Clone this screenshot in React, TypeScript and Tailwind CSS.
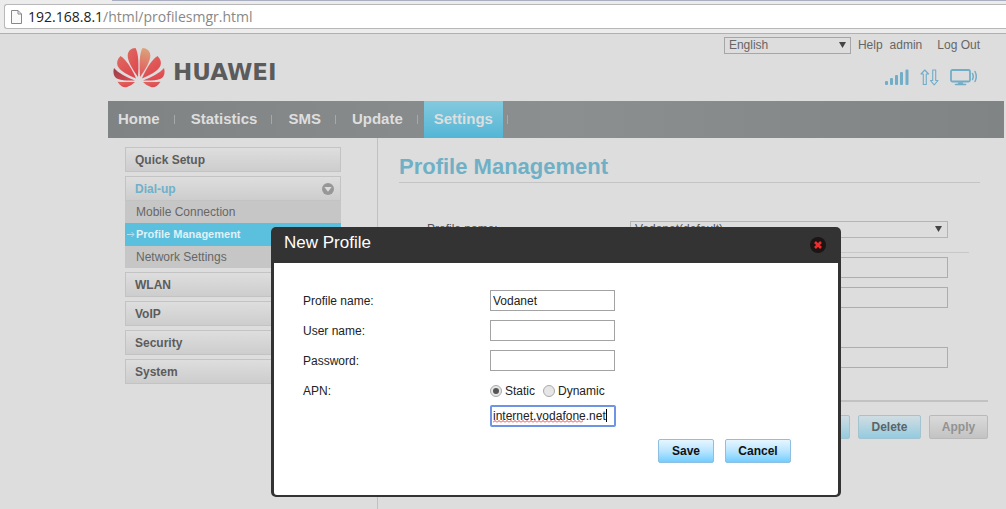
import React, { useState } from "react";

const navItems = ["Home", "Statistics", "SMS", "Update", "Settings"];

function Logo() {
  return (
    <div className="flex items-center gap-2">
      <svg width="52" height="42" viewBox="0 0 52 42" role="img" aria-label="Huawei">
        <defs>
          <linearGradient id="petal" x1="0" y1="0" x2="0.6" y2="1">
            <stop offset="0" stopColor="#de6a60" />
            <stop offset="1" stopColor="#e0474f" />
          </linearGradient>
          <linearGradient id="petalLight" x1="0.5" y1="0" x2="0.4" y2="1">
            <stop offset="0" stopColor="#dda37b" />
            <stop offset="1" stopColor="#e0555a" />
          </linearGradient>
          <linearGradient id="petalDark" x1="0" y1="0" x2="1" y2="0.8">
            <stop offset="0" stopColor="#96404a" />
            <stop offset="1" stopColor="#e0474f" />
          </linearGradient>
        </defs>
        <g fill="url(#petal)">
          <path d="M25 30C25.600 19 26 7 22.500 1C18 1 15 4 14.700 8C14.300 14 20 23 25 30Z" />
          <path d="M23 31.500C20 24 14 13 7.500 9C4.500 12 3.500 15 4.500 18.500C6.500 24 16 28.500 23 31.500Z" />
          <path d="M29 31.500C32 24 38 13 44.500 9C47.500 12 48.500 15 47.500 18.500C45.500 24 36 28.500 29 31.500Z" />
          <path d="M30 33.500C38 30.500 47 26 51 21C52.500 26 51 30.500 47 32C42.500 33.800 36 33.700 30 33.500Z" />
          <path d="M30 35C36 35 42 35 47.500 34.700C44.500 39.500 41 41 38 40C35 39 32 37 30 35Z" />
          <path d="M22 35C16 35 10 35 4.500 34.700C7.500 39.500 11 41 14 40C17 39 20 37 22 35Z" />
        </g>
        <path fill="url(#petalLight)" d="M27 30C26.400 19 26 7 29.500 1C34 1 37 4 37.300 8C37.700 14 32 23 27 30Z" />
        <path fill="url(#petalDark)" d="M22 33.500C14 30.500 5 26 1 21C-0.500 26 1 30.500 5 32C9.500 33.800 16 33.700 22 33.500Z" />
      </svg>
      <span className="pt-[7px] font-['DejaVu_Sans'] text-[23px] leading-6 font-bold text-[#5b5b5b]">HUAWEI</span>
    </div>
  );
}

function StatusIcons() {
  return (
    <div className="flex items-center gap-[11px] text-[#72adc8]">
      <svg width="24" height="17" viewBox="0 0 24 17" fill="currentColor" aria-label="Signal">
        <rect x="0" y="12" width="3" height="4" rx="1" />
        <rect x="5" y="9" width="3" height="7" rx="1" />
        <rect x="10" y="6" width="3" height="10" rx="1" />
        <rect x="15" y="3" width="3" height="13" rx="1" />
        <rect x="20.500" y="0.500" width="3" height="15.500" rx="1" />
      </svg>
      <svg width="19" height="17" viewBox="0 0 19 17" fill="none" stroke="currentColor" strokeWidth="1.100" strokeLinejoin="round" aria-label="Traffic">
        <path d="M3.300 15.500V5H1L4.800 1L8.600 5H6.300V15.500Z" />
        <path d="M12.700 1V11.500H10.400L14.200 15.800L18 11.500H15.700V1Z" />
      </svg>
      <svg width="28" height="17" viewBox="0 0 28 17" fill="none" stroke="currentColor" strokeLinecap="round" aria-label="Connected">
        <rect x="1" y="1" width="19" height="11.500" rx="1.500" strokeWidth="1.800" />
        <path d="M8.500 14H12.500M5.500 15.500H15.500" strokeWidth="1.600" />
        <path d="M22.500 4.500Q24 7.500 22.500 10.500M25 2.500Q27.600 7.500 25 12.500" strokeWidth="1.500" />
      </svg>
    </div>
  );
}

function Arrow({ className }: { className: string }) {
  return (
    <svg className={`pointer-events-none absolute ${className}`} width="7" height="6" viewBox="0 0 7 6" fill="#444">
      <path d="M0 0H7L3.500 6Z" />
    </svg>
  );
}

function MenuHead({ children, active }: { children: React.ReactNode; active?: boolean }) {
  return (
    <button
      className={`flex h-[25px] w-full items-center justify-between border border-[#c3c3c3] bg-linear-to-b from-[#dedede] to-[#cdcdcd] pr-[6px] pl-[9px] text-left font-bold ${active ? "text-[#6fb0ca]" : "text-[#5c5c5c]"}`}
    >
      {children}
      {active && (
        <svg width="12" height="12" viewBox="0 0 12 12" aria-hidden="true">
          <circle cx="6" cy="6" r="6" fill="#979797" />
          <path d="M2.300 4H9.700L6 8.700Z" fill="#dcdcdc" />
        </svg>
      )}
    </button>
  );
}

function Sidebar() {
  return (
    <aside className="w-[216px] shrink-0 pt-[9px] text-[12px]">
      <ul className="flex flex-col gap-1">
        <li><MenuHead>Quick Setup</MenuHead></li>
        <li>
          <MenuHead active>Dial-up</MenuHead>
          <ul className="bg-[#c6c6c6] text-[#666]">
            <li><a href="#mobile" className="block h-[22px] pl-[11px] leading-[22px]">Mobile Connection</a></li>
            <li>
              <a href="#profile" className="flex h-[23px] items-center gap-px bg-[#5bbfde] pl-[2px] text-[11px] font-bold text-[#dff1f7]">
                <svg width="8" height="7" viewBox="0 0 8 7" fill="none" stroke="#b4dfee" aria-hidden="true">
                  <path d="M0 3.500H7M4.500 1L7 3.500L4.500 6" />
                </svg>
                Profile Management
              </a>
            </li>
            <li><a href="#network" className="block h-[22px] pl-[11px] leading-[22px]">Network Settings</a></li>
          </ul>
        </li>
        {["WLAN", "VoIP", "Security", "System"].map((name) => (
          <li key={name}><MenuHead>{name}</MenuHead></li>
        ))}
      </ul>
    </aside>
  );
}

const pageInput = "col-start-2 h-[21px] w-full border border-[#adadad] bg-transparent px-1";
const pageButton =
  "h-6 rounded-[2px] border border-[#a3c3d0] bg-linear-to-b from-[#d0dde2] to-[#94cbe0] text-[12px] font-bold text-[#5c6468]";

function ProfilePage() {
  return (
    <main className="min-h-[371px] min-w-0 flex-1 border-l border-[#c0c0c0] pl-[21px] text-[12px] text-[#555]">
      <h1 className="mr-2 border-b border-[#c4c4c4] pt-[14px] text-[22px] leading-[30px] font-bold text-[#6fb0c6]">
        Profile Management
      </h1>
      <div className="mt-[37px] mr-[19px] ml-7 grid grid-cols-[203px_1fr] items-center">
        <label htmlFor="profile">Profile name:</label>
        <div className="relative mr-[21px]">
          <select id="profile" className="block h-[17px] w-full appearance-none border border-[#b4b4b4] bg-transparent px-1 leading-[15px]">
            <option>Vodanet(default)</option>
          </select>
          <Arrow className="top-[5px] right-[6px]" />
        </div>
      </div>
      <div className="mt-[14px] mr-[19px] ml-7 border-t border-[#c8c8c8]" />
      <div className="mt-1 mr-10 ml-7 grid auto-rows-[21px] grid-cols-[203px_1fr] items-center gap-y-[9px]">
        <label htmlFor="user">User name:</label>
        <input id="user" className={pageInput} />
        <label htmlFor="pass">Password:</label>
        <input id="pass" type="password" className={pageInput} />
        <span>APN:</span>
        <span>Static</span>
        <label htmlFor="apn" className="invisible">APN</label>
        <input id="apn" className={pageInput} />
      </div>
      <div className="mt-8 border-t-2 border-[#c2c2c2]" />
      <div className="mt-[13px] flex justify-end gap-2">
        <button className={`${pageButton} w-[100px]`}>New Profile</button>
        <button className={`${pageButton} w-[63px]`}>Delete</button>
        <button className="h-6 w-[59px] rounded-[2px] border border-[#b9b9b9] bg-linear-to-b from-[#dadada] to-[#c3c3c3] text-[12px] font-bold text-[#929292]">
          Apply
        </button>
      </div>
    </main>
  );
}

const dialogInput = "h-[21px] w-[125px] border border-[#a3a3a3] bg-white px-[2px] text-[12px] text-[#222] outline-none";
const dialogButton =
  "h-6 rounded-[2px] border border-[#8fbfe0] bg-linear-to-b from-[#e6f6ff] via-[#b9e5ff] to-[#6fceff] text-[12px] font-bold text-[#111]";
const radio =
  "grid size-3 appearance-none place-items-center rounded-full border border-[#aaa] bg-[#e6e6e6] before:size-[6px] before:rounded-full checked:before:bg-[#555]";

function Dialog({ onClose }: { onClose: () => void }) {
  const [mode, setMode] = useState("static");
  const [apn, setApn] = useState("internet.vodafone.net");
  const [name, setName] = useState("Vodanet");
  return (
    <section
      role="dialog"
      aria-labelledby="dialog-title"
      className="absolute top-[193px] left-1/2 w-[570px] -translate-x-1/2 rounded-[5px] bg-[#333] px-[3px] pb-[2px]"
    >
      <header className="flex h-9 items-center justify-between pr-3 pl-[10px]">
        <h2 id="dialog-title" className="pb-1 text-[17px] leading-5 text-white">New Profile</h2>
        <button aria-label="Close" onClick={onClose}>
          <svg width="16" height="16" viewBox="0 0 16 16" className="block">
            <circle cx="8" cy="8" r="8" fill="#1b1515" />
            <path d="M5 5L11 11M11 5L5 11" stroke="#ee2c2c" strokeWidth="2.600" />
          </svg>
        </button>
      </header>
      <form className="rounded-b-[3px] bg-white px-[29px] pt-[27px] pb-8 text-[12px] text-[#222]" onSubmit={(e) => e.preventDefault()}>
        <div className="grid auto-rows-[21px] grid-cols-[187px_1fr] items-center gap-y-[9px]">
          <label htmlFor="d-name">Profile name:</label>
          <input id="d-name" className={dialogInput} value={name} onChange={(e) => setName(e.target.value)} />
          <label htmlFor="d-user">User name:</label>
          <input id="d-user" className={dialogInput} />
          <label htmlFor="d-pass">Password:</label>
          <input id="d-pass" type="password" className={dialogInput} />
          <label htmlFor="d-apn">APN:</label>
          <div className="flex items-center gap-2">
            <label className="flex items-center gap-[3px]">
              <input type="radio" name="mode" className={radio} checked={mode === "static"} onChange={() => setMode("static")} />
              Static
            </label>
            <label className="flex items-center gap-[3px]">
              <input type="radio" name="mode" className={radio} checked={mode === "dynamic"} onChange={() => setMode("dynamic")} />
              Dynamic
            </label>
          </div>
        </div>
        <div className="relative mt-1 ml-[187px] w-[126px]">
          <input
            id="d-apn"
            className="block h-[22px] w-full rounded-[2px] border-2 border-[#6f94e4] bg-white px-px text-[12px] text-[#222] outline-none"
            value={apn}
            onChange={(e) => setApn(e.target.value)}
          />
          <svg className="pointer-events-none absolute top-[15px] left-[3px]" width="90" height="3" aria-hidden="true">
            <defs>
              <pattern id="wave" width="4" height="3" patternUnits="userSpaceOnUse">
                <path d="M0 2.500L2 0.500L4 2.500" fill="none" stroke="#e33b3b" />
              </pattern>
            </defs>
            <rect width="90" height="3" fill="url(#wave)" />
          </svg>
          <span className="pointer-events-none absolute top-1 left-[116px] h-[13px] w-px bg-black" />
        </div>
        <div className="mt-3 mr-[18px] flex justify-end gap-[11px]">
          <button className={`${dialogButton} w-14`}>Save</button>
          <button className={`${dialogButton} w-[66px]`} type="button" onClick={onClose}>Cancel</button>
        </div>
      </form>
    </section>
  );
}

export default function App() {
  const [open, setOpen] = useState(true);
  return (
    <div className="min-h-screen overflow-hidden bg-[#ddd] font-['Liberation_Sans',Arial,sans-serif]">
      <div className="border-b border-[#b0b0b0] bg-[#ececec] pb-1">
        <div className="ml-28 h-px bg-[#a9afc0]" />
        <div className="mt-[3px] ml-1 flex h-[25px] items-center gap-[6px] rounded-l-[3px] border border-r-0 border-[#b8b8b8] bg-white pl-[6px]">
          <svg width="11" height="14" viewBox="0 0 11 14" fill="#fafafa" stroke="#888" aria-hidden="true">
            <path d="M0.500 0.500H7L10.500 4V13.500H0.500ZM7 0.500V4H10.500" />
          </svg>
          <p className="font-['Open_Sans'] text-[14px] leading-5 text-[#888]">
            <span className="text-[#222]">192.168.8.1</span>/html/profilesmgr.html
          </p>
        </div>
      </div>

      <div className="relative mr-[2px] ml-[108px]">
        <header className="flex h-[67px] justify-between pr-6 pl-[5px]">
          <div className="pt-[13px]"><Logo /></div>
          <div className="flex flex-col items-end text-[12px] leading-[17px] text-[#666]">
            <div className="mt-[3px] flex">
              <div className="relative mr-[7px] w-[127px]">
                <select aria-label="Language" className="block h-[17px] w-full appearance-none border border-[#a6a6a6] bg-transparent px-1 leading-[15px]">
                  <option>English</option>
                </select>
                <Arrow className="top-[5px] right-[5px]" />
              </div>
              <a href="#help" className="mr-[7px]">Help</a>
              <a href="#admin" className="mr-[15px]">admin</a>
              <a href="#logout">Log Out</a>
            </div>
            <div className="mt-[15px] mr-[2px]"><StatusIcons /></div>
          </div>
        </header>

        <nav className="flex h-[37px] bg-linear-to-r from-[#7f8383] via-[#8b8f8f] to-[#808484] text-[15px] font-bold text-[#dedede]">
          {navItems.map((item) => (
            <div key={item} className="flex items-center">
              <a
                href={`#${item}`}
                className={`flex h-full items-center px-[10px] ${item === "Settings" ? "bg-linear-to-b from-[#83c9de] to-[#52b6d6]" : ""}`}
              >
                {item}
              </a>
              <span className={`h-[9px] w-px bg-[#a5a9a9] ${item === "Settings" ? "ml-1" : "mr-[6px] ml-1"}`} />
            </div>
          ))}
        </nav>

        <div className="flex gap-9 pr-4 pl-[17px]">
          <Sidebar />
          <ProfilePage />
        </div>

        {open && <Dialog onClose={() => setOpen(false)} />}
      </div>
    </div>
  );
}
